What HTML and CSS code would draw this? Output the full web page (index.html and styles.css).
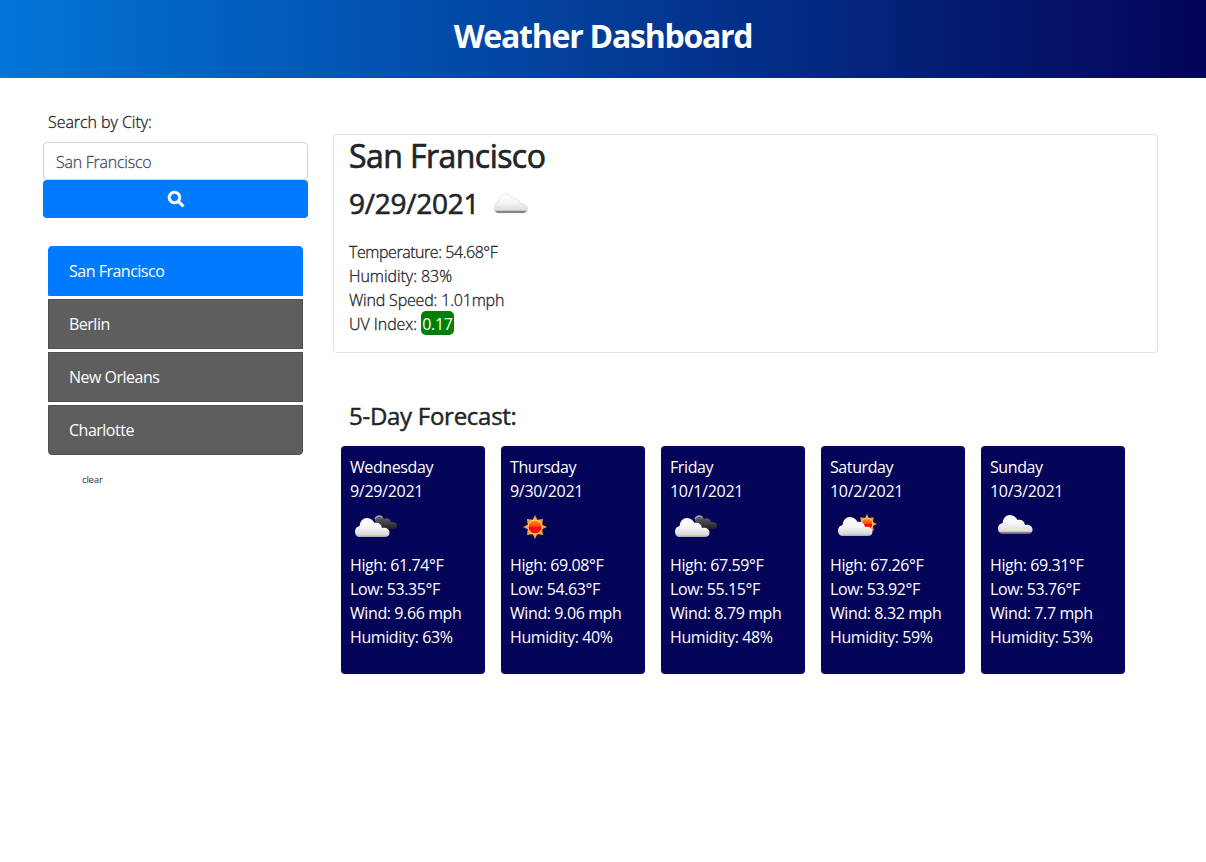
FILE: index.html
```html
<!DOCTYPE html>
<html lang="en">
<head>
<meta charset="utf-8">
<title>Weather Dashboard</title>
<link rel="stylesheet" href="styles.css">
</head>
<body>
<svg class="defs" width="0" height="0" aria-hidden="true">
  <defs>
    <linearGradient id="white" x1="0" y1="0" x2="0" y2="1">
      <stop offset="0" stop-color="#fff"/><stop offset=".45" stop-color="#f6f6f6"/><stop offset=".86" stop-color="#dcdcdc"/><stop offset=".9" stop-color="#8a8a8a"/><stop offset="1" stop-color="#666"/>
    </linearGradient>
    <linearGradient id="soft" x1="0" y1="0" x2="0" y2="1">
      <stop offset="0" stop-color="#fff"/><stop offset=".5" stop-color="#f6f6f6"/><stop offset=".88" stop-color="#d8d8d8"/><stop offset="1" stop-color="#aaa"/>
    </linearGradient>
    <linearGradient id="dark" x1="0" y1="0" x2="0" y2="1">
      <stop offset="0" stop-color="#666"/><stop offset=".4" stop-color="#484848"/><stop offset="1" stop-color="#222"/>
    </linearGradient>
    <linearGradient id="disc" x1="0" y1="0" x2="0" y2="1">
      <stop offset="0" stop-color="#ff9a20"/><stop offset=".45" stop-color="#ff4a08"/><stop offset=".55" stop-color="#f00"/><stop offset="1" stop-color="#ff1c00"/>
    </linearGradient>
    <path id="cloud" d="M5 19C2 19 0 17 0 13.500C0 10.500 2 8.500 4.600 8C5 3 8 0 12 0C15.500 0 18 2.200 19.500 5C23 3.800 26.500 5.800 27 10C30.500 9 35 11 34.500 15C34.300 17.500 32.500 19 30 19Z"/>
    <g id="broken">
      <path fill="url(#dark)" d="M25 15C26 12 32 11 34 15C36 13.500 40.500 14 41 18C44 17.500 47 19 47 21.500C47 24 45 25 42 25H30L25 20Z"/>
      <path d="M25 15C26 12 30 11 32.500 13.500" fill="none" stroke="#aaa" stroke-width="1.500"/>
      <use href="#cloud" fill="url(#soft)" transform="translate(5 14)"/>
    </g>
    <g id="sun">
      <path fill="#f6a02c" d="M0-12L2.300-7.200L8.100-8.100L7.200-2.300L12 0L7.200 2.300L8.100 8.100L2.300 7.200L0 12L-2.300 7.200L-8.100 8.100L-7.200 2.300L-12 0L-7.200-2.300L-8.100-8.100L-2.300-7.200Z"/>
      <circle r="7" fill="url(#disc)" stroke="#ffd9a0" stroke-width="1"/>
    </g>
  </defs>
</svg>
<header class="header"><h1 class="title">Weather Dashboard</h1></header>
<div class="layout">
  <aside class="sidebar">
    <label class="label" for="city">Search by City:</label>
    <input class="input" id="city" type="text" value="San Francisco">
    <button class="search" aria-label="Search"><svg width="16" height="16" viewBox="0 0 512 512"><path fill="#fff" stroke="#fff" stroke-width="16" d="M505 442.700L405.300 343c-4.500-4.500-10.600-7-17-7H372c27.600-35.300 44-79.700 44-128C416 93.100 322.900 0 208 0S0 93.100 0 208s93.100 208 208 208c48.300 0 92.700-16.400 128-44v16.300c0 6.400 2.500 12.500 7 17l99.700 99.700c9.400 9.400 24.600 9.400 33.900 0l28.300-28.300c9.400-9.400 9.400-24.600.1-34zM208 336c-70.700 0-128-57.200-128-128 0-70.700 57.200-128 128-128 70.700 0 128 57.200 128 128 0 70.700-57.200 128-128 128z"/></svg></button>
    <ul class="history">
      <li class="city active">San Francisco</li>
      <li class="city">Berlin</li>
      <li class="city">New Orleans</li>
      <li class="city">Charlotte</li>
    </ul>
    <button class="clear">clear</button>
  </aside>
  <main class="main">
    <section class="current">
      <h2 class="name">San Francisco</h2>
      <div class="dateline"><h3 class="date">9/29/2021</h3><svg width="34" height="20" viewBox="0 0 35 20" preserveAspectRatio="none"><use href="#cloud" fill="url(#white)" stroke="#ccc" stroke-width=".5"/></svg></div>
      <p class="stat temp">Temperature: 54.68°F</p>
      <p class="stat">Humidity: 83%</p>
      <p class="stat wind">Wind Speed: 1.01mph</p>
      <p class="stat">UV Index: <span class="uv">0.17</span></p>
    </section>
    <h3 class="heading">5-Day Forecast:</h3>
    <section class="forecast">
      <article class="day"><p>Wednesday</p><p class="when">9/29/2021</p>
        <svg class="icon" width="50" height="50" viewBox="0 0 50 50"><use href="#broken"/></svg>
        <p>High: 61.74°F</p><p>Low: 53.35°F</p><p>Wind: 9.66 mph</p><p>Humidity: 63%</p></article>
      <article class="day"><p>Thursday</p><p class="when">9/30/2021</p>
        <svg class="icon" width="50" height="50" viewBox="0 0 50 50"><use href="#sun" x="25" y="23"/></svg>
        <p>High: 69.08°F</p><p>Low: 54.63°F</p><p>Wind: 9.06 mph</p><p>Humidity: 40%</p></article>
      <article class="day"><p>Friday</p><p class="when">10/1/2021</p>
        <svg class="icon" width="50" height="50" viewBox="0 0 50 50"><use href="#broken"/></svg>
        <p>High: 67.59°F</p><p>Low: 55.15°F</p><p>Wind: 8.79 mph</p><p>Humidity: 48%</p></article>
      <article class="day"><p>Saturday</p><p class="when">10/2/2021</p>
        <svg class="icon" width="50" height="50" viewBox="0 0 50 50"><use href="#sun" transform="translate(37 20) scale(.83)"/><use href="#cloud" fill="url(#soft)" transform="translate(8 13)"/></svg>
        <p>High: 67.26°F</p><p>Low: 53.92°F</p><p>Wind: 8.32 mph</p><p>Humidity: 59%</p></article>
      <article class="day"><p>Sunday</p><p class="when">10/3/2021</p>
        <svg class="icon" width="50" height="50" viewBox="0 0 50 50"><use href="#cloud" fill="url(#white)" transform="translate(8 11)"/></svg>
        <p>High: 69.31°F</p><p>Low: 53.76°F</p><p>Wind: 7.7 mph</p><p>Humidity: 53%</p></article>
    </section>
  </main>
</div>
</body>
</html>
```
FILE: styles.css
```css
* { box-sizing: border-box; }
body { margin: 0; background: #fff; color: #212529; font: 400 16px/24px "Open Sans", "Noto Sans", sans-serif; letter-spacing: -0.45px; }
h1, h2, h3, p, ul { margin: 0; padding: 0; }
.defs { display: block; }
.header { height: 78px; padding-top: 17px; text-align: center; background: linear-gradient(to right, #0275d8, #040458); }
.title { color: #fff; font-size: 32px; line-height: 38px; font-weight: 700; letter-spacing: -1.25px; }
.layout { display: flex; align-items: flex-start; gap: 25px; padding: 32px 48px 0 43px; }
.sidebar { width: 265px; display: flex; flex-direction: column; }
.label { margin: 0 0 8px 5px; font-weight: 300; letter-spacing: -0.05px; -webkit-text-stroke: 0.3px; }
.input { width: 100%; height: 38px; padding: 1px 12px 0; border: 1px solid #ced4da; border-radius: 4px; color: #495057; font: inherit; font-weight: 300; letter-spacing: -0.25px; -webkit-text-stroke: 0.3px; background: #fff; }
.search { height: 38px; padding: 0; border: 0; border-radius: 4px; background: #007bff; display: flex; align-items: center; justify-content: center; }
.search svg { overflow: visible; }
.history { margin: 28px 5px 0; list-style: none; display: flex; flex-direction: column; gap: 3px; }
.city { height: 50px; padding: 12px 20px 0; line-height: 24px; border: 1px solid #505050; background: #5e5e5e; color: #fff; letter-spacing: -0.5px; }
.city:first-child { border-radius: 4px 4px 0 0; }
.city:last-child { border-radius: 0 0 4px 4px; }
.city.active { background: #007bff; border-color: #007bff; }
.clear { align-self: flex-start; margin: 17px 0 0 39px; padding: 0; border: 0; background: none; color: #333; font: 400 9.600px/16px "Open Sans", sans-serif; letter-spacing: -0.2px; }
.main { flex: 1; padding-top: 24px; }
.current { height: 219px; padding: 2px 15px; border: 1px solid #dfe2e5; border-radius: 4px; }
.name { font-size: 32px; line-height: 38px; font-weight: 400; letter-spacing: -0.55px; -webkit-text-stroke: 0.7px; }
.dateline { display: flex; align-items: center; gap: 15px; height: 50px; margin-top: 4px; margin-bottom: 11px; }
.date { margin-top: -2px; font-size: 28px; line-height: 34px; font-weight: 400; letter-spacing: -0.25px; -webkit-text-stroke: 0.6px; }
.stat { height: 24px; font-weight: 300; letter-spacing: -0.05px; -webkit-text-stroke: 0.3px; }
.temp { letter-spacing: -0.45px; }
.wind { letter-spacing: -0.18px; }
.uv { display: inline-block; height: 24px; margin-top: -1px; vertical-align: top; padding: 1px 1px 0; border-radius: 5px; background: #008000; color: #fff; font-weight: 400; letter-spacing: -0.3px; -webkit-text-stroke: 0; }
.heading { margin: 48px 0 16px 16px; font-size: 24px; line-height: 29px; font-weight: 400; letter-spacing: -0.27px; -webkit-text-stroke: 0.45px; }
.forecast { display: flex; gap: 16px; padding-left: 8px; }
.day { width: 144px; height: 228px; padding: 9px 9px; border-radius: 4px; background: #040458; color: #fff; white-space: nowrap; letter-spacing: -0.4px; }
.when { letter-spacing: -0.3px; }
.icon { display: block; margin: 1px 0 -1px; }
```
